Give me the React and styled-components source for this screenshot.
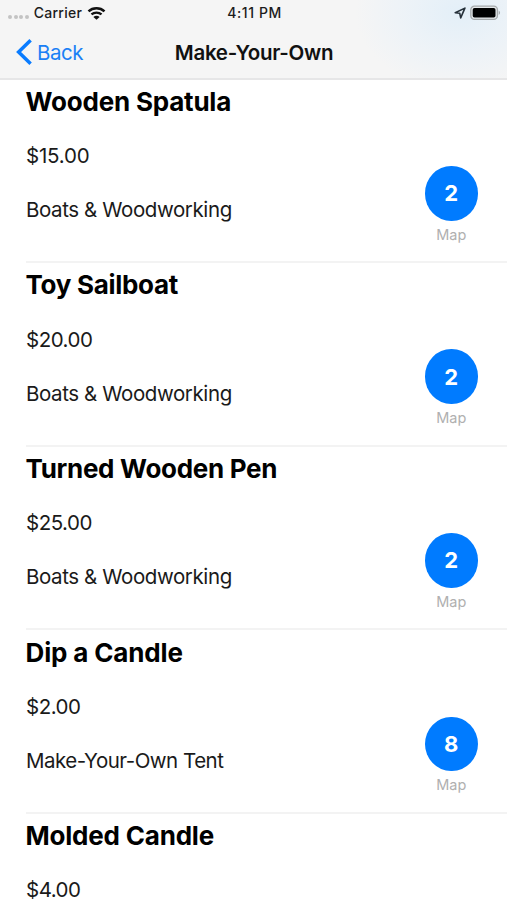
import React from "react";
import styled, { createGlobalStyle } from "styled-components";

const items = [
    { name: "Wooden Spatula", price: "$15.00", place: "Boats & Woodworking", count: 2, nameSpacing: "-0.2px", priceSpacing: "-0.2px" },
    { name: "Toy Sailboat", price: "$20.00", place: "Boats & Woodworking", count: 2 },
    { name: "Turned Wooden Pen", price: "$25.00", place: "Boats & Woodworking", count: 2 },
    { name: "Dip a Candle", price: "$2.00", place: "Make-Your-Own Tent", count: 8, nameSpacing: "-0.15px", placeSpacing: "-0.5px" },
    { name: "Molded Candle", price: "$4.00", nameSpacing: "-0.2px" },
];

const WifiIcon = () => (
    <svg width="19" height="15" viewBox="0 0 20 15" fill="none" stroke="#111">
        <path d="M1.6 5.2C6.2 0.9 13.8 0.9 18.4 5.2" strokeWidth="2.7" />
        <path d="M4.7 8.5C7.7 5.8 12.3 5.8 15.3 8.5" strokeWidth="2.4" />
        <path d="M10 14.2L6.7 11.1C8.6 9.4 11.4 9.4 13.3 11.1Z" fill="#111" stroke="none" />
    </svg>
);

const LocationIcon = () => (
    <svg width="12" height="12" viewBox="0 0 12 12" fill="none" stroke="#26313a" strokeWidth="1.6">
        <path d="M10.9 1.1L1.2 5.7L5.7 6.2L6.7 10.9Z" strokeLinejoin="round" />
    </svg>
);

const BatteryIcon = () => (
    <svg width="31" height="16" viewBox="0 0 31 16">
        <rect x="0.8" y="1.2" width="26.6" height="13.2" rx="3.6" fill="#e4e8ea" stroke="#a5a9ab" strokeWidth="1.3" />
        <rect x="2.7" y="3" width="22.8" height="9.6" rx="1.8" fill="#000" />
        <path d="M28.7 5.6C30.5 6.3 30.5 9.3 28.7 10Z" fill="#a5a9ab" />
    </svg>
);

const ChevronIcon = () => (
    <svg width="17" height="28" viewBox="0 0 17 28" fill="none" stroke="#0a7cff" strokeWidth="3.5">
        <path d="M14.6 2.2L2.6 14L14.6 25.8" />
    </svg>
);

const App = () => (
    <Screen>
        <GlobalStyle />
        <Header>
            <StatusBar>
                <Signal>
                    <Dot /><Dot /><Dot /><Dot />
                    <Carrier>Carrier</Carrier>
                    <WifiIcon />
                </Signal>
                <Time>4:11 PM</Time>
                <Power>
                    <LocationIcon />
                    <BatteryIcon />
                </Power>
            </StatusBar>
            <NavBar>
                <BackButton type="button"><ChevronIcon />Back</BackButton>
                <NavTitle>Make-Your-Own</NavTitle>
            </NavBar>
        </Header>
        <List>
            {items.map((item) => (
                <Item key={item.name}>
                    <Details>
                        <Name $spacing={item.nameSpacing}>{item.name}</Name>
                        <Text $spacing={item.priceSpacing || "-0.5px"}>{item.price}</Text>
                        {item.place && <Text $spacing={item.placeSpacing}>{item.place}</Text>}
                    </Details>
                    {item.count && (
                        <MapLink>
                            <Count>{item.count}</Count>
                            <MapLabel>Map</MapLabel>
                        </MapLink>
                    )}
                </Item>
            ))}
        </List>
    </Screen>
);

export default App;

const GlobalStyle = createGlobalStyle`
  * {
    box-sizing: border-box;
  }
  body {
    margin: 0;
    background: #fff;
    font-family: Inter, "Liberation Sans", sans-serif;
    overflow: hidden;
  }
`;

const Screen = styled.div`
  width: 507px;
  height: 900px;
  display: flex;
  flex-direction: column;
  overflow: hidden;
  color: #000;
`;

const Header = styled.header`
  flex: none;
  height: 80px;
  border-bottom: 2px solid #e6e6e7;
  background:
    radial-gradient(ellipse 105px 78px at 460px 12px, #e3eff8 0%, rgba(235, 242, 248, 0.85) 50%, rgba(245, 245, 246, 0) 100%),
    #f5f5f5;
`;

const StatusBar = styled.div`
  display: grid;
  grid-template-columns: 1fr auto 1fr;
  align-items: center;
  height: 26px;
  padding: 0 6px 0 8px;
  font-size: 14px;
  font-weight: 500;
  line-height: 16px;
  color: #1c1c1c;
`;

const Signal = styled.div`
  display: flex;
  align-items: center;
`;

const Dot = styled.span`
  width: 4px;
  height: 4px;
  margin: 8px 1.7px 0 0;
  border-radius: 50%;
  background: #c3c3c3;
`;

const Carrier = styled.span`
  margin: 0 5px 0 3px;
  letter-spacing: 0.25px;
`;

const Time = styled.span`
  letter-spacing: 0.6px;
`;

const Power = styled.div`
  display: flex;
  justify-content: flex-end;
  align-items: center;
  gap: 4px;
`;

const NavBar = styled.div`
  display: grid;
  grid-template-columns: 1fr auto 1fr;
  align-items: center;
  height: 52px;
  padding: 0 15px 0 16px;
`;

const BackButton = styled.button`
  display: flex;
  align-items: center;
  gap: 4px;
  padding: 0;
  border: none;
  background: none;
  font-family: inherit;
  font-size: 20.5px;
  letter-spacing: -0.5px;
  color: #1a80f5;
  cursor: pointer;
`;

const NavTitle = styled.h1`
  margin: 0;
  font-size: 20.5px;
  font-weight: 600;
  letter-spacing: -0.3px;
  color: #111;
`;

const List = styled.ul`
  margin: 0;
  padding: 0 0 0 26px;
  list-style: none;
`;

const Item = styled.li`
  display: flex;
  justify-content: space-between;
  height: 183.65px;
  padding-right: 29.5px;
  border-bottom: 2px solid #f3f3f3;

  &:first-child {
    height: 183.2px;
    margin-top: -0.2px;
  }
`;

const Details = styled.div`
  display: flex;
  flex-direction: column;
  gap: 27px;
  padding-top: 6.3px;
`;

const Name = styled.h2`
  margin: 0 0 -2.8px -0.5px;
  font-size: 26px;
  font-weight: 700;
  line-height: 32px;
  letter-spacing: ${({ $spacing }) => $spacing || "-0.3px"};
  white-space: nowrap;
`;

const Text = styled.p`
  margin: 0;
  font-size: 20.5px;
  line-height: 27px;
  letter-spacing: ${({ $spacing }) => $spacing || "-0.4px"};
  color: #1a1a1a;
  white-space: nowrap;
`;

const MapLink = styled.div`
  display: flex;
  flex-direction: column;
  align-items: center;
  padding-top: 86.4px;
`;

const Count = styled.div`
  display: flex;
  align-items: center;
  justify-content: center;
  width: 52.5px;
  height: 54.5px;
  border-radius: 50%;
  background: #007bff;
  color: #fff;
  font-size: 22px;
  font-weight: 700;
`;

const MapLabel = styled.span`
  margin-top: 5px;
  font-size: 14.5px;
  line-height: 18px;
  color: #b0b0b0;
`;
